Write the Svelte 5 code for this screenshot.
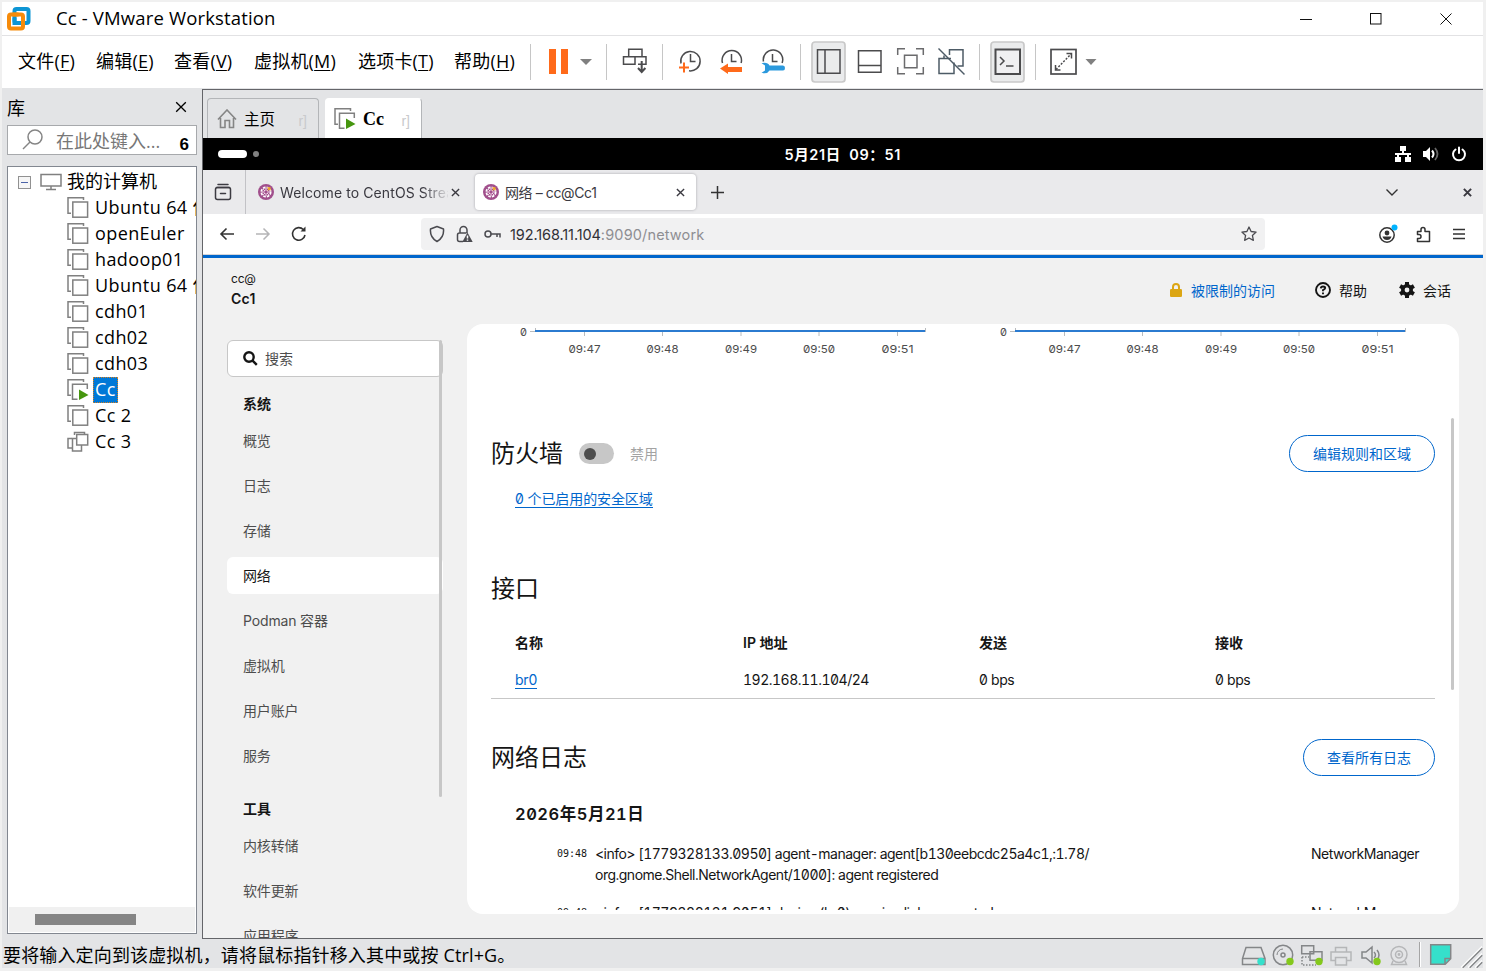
<script>
  const menus = [
    { label: '文件', key: 'F', width: 78 },
    { label: '编辑', key: 'E', width: 78 },
    { label: '查看', key: 'V', width: 80 },
    { label: '虚拟机', key: 'M', width: 104 },
    { label: '选项卡', key: 'T', width: 96 },
    { label: '帮助', key: 'H', width: 72 }
  ];

  const machines = [
    { name: 'Ubuntu 64 位', state: 'off' },
    { name: 'openEuler', state: 'off' },
    { name: 'hadoop01', state: 'off' },
    { name: 'Ubuntu 64 位', state: 'off' },
    { name: 'cdh01', state: 'off' },
    { name: 'cdh02', state: 'off' },
    { name: 'cdh03', state: 'off' },
    { name: 'Cc', state: 'running' },
    { name: 'Cc 2', state: 'off' },
    { name: 'Cc 3', state: 'clones' }
  ];

  const navGroups = [
    { title: '系统', items: ['概览', '日志', '存储', '网络', 'Podman 容器', '虚拟机', '用户账户', '服务'] },
    { title: '工具', items: ['内核转储', '软件更新', '应用程序'] }
  ];

  const ticks = [
    { x: 117.5, label: '09:47' },
    { x: 195.5, label: '09:48' },
    { x: 274, label: '09:49' },
    { x: 352, label: '09:50' },
    { x: 430.5, label: '09:51' }
  ];

  const logs = [
    {
      time: '09:48',
      lines: [
        '<info> [1779328133.0950] agent-manager: agent[b130eebcdc25a4c1,:1.78/',
        'org.gnome.Shell.NetworkAgent/1000]: agent registered'
      ],
      service: 'NetworkManager'
    },
    {
      time: '09:48',
      lines: ['<info> [1779328131.9051] device (br0): carrier: link connected'],
      service: 'NetworkManager'
    }
  ];

  let selectedMachine = 'Cc';
  let selectedNav = '网络';
</script>

{#snippet vmIcon(state)}
  <svg class="vm-icon" width="24" height="24" viewBox="0 0 24 24" fill="none" stroke="#808080" stroke-width="1.5">
    {#if state === 'clones'}
      <path d="M8.500 5V2.500h10v2" />
      <path d="M6 8.500H2v9.500h4" />
      <path d="M11 8.500H6.500v12.500h9V15" />
      <rect x="10.700" y="4.500" width="11" height="10.500" fill="#fff" />
    {:else if state === 'running'}
      <path d="M5 17.2H2V1.8h15.5V4" />
      <path d="M11.5 21.2H6.5V6.2h14.8V11" />
      <path d="M13 11.5l9.5 5.5-9.5 5z" fill="#46960f" stroke="none" />
    {:else}
      <path d="M5 17.2H2V1.8h15.5V4" />
      <rect x="6.8" y="6" width="14.8" height="15.2" fill="#fff" />
    {/if}
  </svg>
{/snippet}

{#snippet centos()}
  <svg class="favicon" width="16" height="16" viewBox="0 0 16 16">
    <circle cx="8" cy="8" r="8" fill="#a14f8c" />
    <circle cx="8" cy="8" r="4.7" fill="none" stroke="#fff" stroke-width="1.7" stroke-dasharray="2.6 1.1" />
    <path d="M8 4v8M4 8h8M5.2 5.2l5.6 5.6M10.8 5.2l-5.6 5.6" stroke="#f4dcec" stroke-width="1" />
    <circle cx="8" cy="8" r="1.3" fill="#a14f8c" />
    <path d="M9 3.2h3.6v3.6l-1.4-1-2 1.2 1-2z" fill="#efa724" />
  </svg>
{/snippet}

{#snippet cross(size, weight)}
  <svg width={size} height={size} viewBox="0 0 10 10" stroke="currentColor" stroke-width={weight} fill="none">
    <path d="M1 1l8 8M9 1l-8 8" />
  </svg>
{/snippet}

{#snippet chart()}
  <svg class="chart" width="480" height="40" viewBox="0 0 480 40">
    <path d="M63 7.5h5M68.5 4v4M458.5 4v4" stroke="#b8bbbe" fill="none" />
    {#each ticks as tick}
      <path d="M{tick.x} 8v4" stroke="#b8bbbe" />
      <text x={tick.x} y="29" text-anchor="middle" textLength="32" lengthAdjust="spacingAndGlyphs">{tick.label}</text>
    {/each}
    <path d="M68 7h390" stroke="#2b7bd0" stroke-width="2" />
    <text x="53" y="12">0</text>
  </svg>
{/snippet}

<div class="window">
  <header class="titlebar">
    <svg width="24" height="24" viewBox="0 0 24 24" fill="none" stroke-width="4">
      <rect x="7.5" y="2" width="14" height="14" rx="2" stroke="#0d95d4" />
      <rect x="2" y="7.5" width="14" height="14" rx="2" stroke="#f68b0a" />
      <path d="M7.5 10.5V16H14" stroke="#0d95d4" />
      <path d="M7.5 9.5v-2h4" stroke="#f68b0a" />
    </svg>
    <span class="title">Cc - VMware Workstation</span>
    <div class="window-buttons">
      <svg width="12" height="12" viewBox="0 0 12 12" stroke="#111" fill="none"><path d="M0 6.5h12" /></svg>
      <svg width="12" height="12" viewBox="0 0 12 12" stroke="#111" fill="none"><rect x="0.5" y="0.5" width="10.5" height="10.5" /></svg>
      <svg width="12" height="12" viewBox="0 0 12 12" stroke="#111" fill="none"><path d="M.5 .5l11 11M11.5 .5l-11 11" /></svg>
    </div>
  </header>

  <div class="menubar">
    <nav class="menus">
      {#each menus as menu}
        <span style="width: {menu.width}px">{menu.label}(<u>{menu.key}</u>)</span>
      {/each}
    </nav>
    <svg class="tools" width="580" height="50" viewBox="0 0 580 50" fill="none" stroke="#4b4b4d" stroke-width="1.5">
      <g stroke="#c6c6c6" stroke-width="1">
        <path d="M.5 8v36M76.5 8v36M132.5 8v36M270.5 8v36M449.5 8v36M505.5 8v36" />
      </g>
      <path d="M19 13h7v25h-7zM31 13h7v25h-7z" fill="#ff6a1a" stroke="none" />
      <path d="M50 23h12l-6 6z" fill="#808080" stroke="none" />
      <g>
        <path d="M98.7 13.200h13.300v7.500h-13.300zM93.500 20.700h11.500v7.500h-11.500zM105 20.700h11v7.500h-8" />
        <path d="M111.700 25v10.500M108 32l3.700 4 3.700-4" stroke-width="2" />
      </g>
      <g>
        <path d="M151 27.5a9.7 9.7 0 1 1 8 7.3M160.5 18v7.5h5" />
        <path d="M149 31.5h10M154 26.5v10" stroke="#ff6a1a" stroke-width="2" />
      </g>
      <g>
        <path d="M192.5 27a9.7 9.7 0 1 1 18.6 0M201.5 18v7.5h5" />
        <path d="M190 32.5l8-5v3.5h14v5h-14v2z" fill="#ff6a1a" stroke="none" />
      </g>
      <g>
        <path d="M233.5 25.500a9.7 9.7 0 1 1 18.6 1.500M242.500 18v7.500h5" />
        <path d="M231.500 27.200q6-1.500 8 2.300h13.500q2 0 2 2.500t-2 2.500h-13.500q-2 3.800-8 2.300l3.500-2.300v-5z" fill="#2b99dd" stroke="none" />
      </g>
      <g>
        <rect x="282" y="6" width="33" height="40" rx="3" fill="#eaebec" stroke="#c9c9c9" stroke-width="1.700" />
        <path d="M287.500 13.700h22.500v23.500h-22.500zM295 14v23" />
      </g>
      <path d="M328.500 14.700h22.500v21.500h-22.500zM329 29.500h22" />
      <path d="M367.700 19v-6.300h7.300M386 12.700h7.300v6.300M367.700 31v6.700h7.300M386 37.700h7.300v-6.700M374.500 19.200h12.500v12.500h-12.500z" stroke="#6b6b6d" />
      <g stroke="#4d5b66">
        <path d="M419.500 19v-5.300h13.500v16.300h-5.500M421 22.500h-12v15h15v-11M414 22.500v-3" />
        <path d="M408.500 12.500l26 26" />
      </g>
      <g>
        <rect x="461" y="6" width="33" height="40" rx="3" fill="#eaebec" stroke="#c9c9c9" stroke-width="1.700" />
        <rect x="465.500" y="13.500" width="24.500" height="24.500" stroke-width="2" fill="#f0f0f2" />
        <path d="M470 21l4 4-4 4M476 30h7.500" />
      </g>
      <g>
        <rect x="521" y="13.500" width="25" height="24.500" stroke-width="1.700" />
        <path d="M536.500 17.500h5v5M525.500 29v5h5" />
        <path d="M526 33.500l15-15.500" stroke-dasharray="2 1.500" />
        <path d="M555.500 23h11l-5.500 6z" fill="#808080" stroke="none" />
      </g>
    </svg>
  </div>

  <div class="workspace">
    <aside class="library">
      <div class="library-head">
        <span>库</span>
        {@render cross(12, 1.1)}
      </div>
      <div class="library-search">
        <svg width="22" height="22" viewBox="0 0 22 22" fill="none" stroke="#858585" stroke-width="1.5">
          <circle cx="13" cy="8" r="7" />
          <path d="M8 13l-7 7" />
        </svg>
        <span class="placeholder">在此处键入...</span>
        <b>6</b>
      </div>
      <div class="tree">
        <div class="tree-root">
          <svg class="toggle" width="13" height="13" viewBox="0 0 13 13"><rect x=".5" y=".5" width="12" height="12" fill="#f6f6f6" stroke="#919191" /><path d="M3 6.500h7" stroke="#4b63a7" /></svg>
          <svg width="22" height="18" viewBox="0 0 22 18" fill="none" stroke="#808080" stroke-width="1.500"><path d="M1 1.500h20v11.500H1zM11 13v3M6 16.500h10" /></svg>
          <span>我的计算机</span>
        </div>
        {#each machines as machine}
          <div class="machine">
            {@render vmIcon(machine.state)}
            <span class:selected={machine.name === selectedMachine}>{machine.name}</span>
          </div>
        {/each}
        <div class="tree-scroll"><i></i></div>
      </div>
    </aside>

    <section class="console">
      <div class="vm-tabs">
        <div class="vm-tab home">
          <svg width="20" height="20" viewBox="0 0 20 20" fill="none" stroke="#858585" stroke-width="1.600"><path d="M1 10.500L10 1l9 9.500M3.500 9v9.500h4.500V11.500h4.500v7h4V9" /></svg>
          <span>主页</span>
          <em>r]</em>
        </div>
        <div class="vm-tab active">
          {@render vmIcon('running')}
          <b>Cc</b>
          <em>r]</em>
        </div>
      </div>

      <div class="gnome-bar">
        <div class="workspaces"><i></i><i></i></div>
        <span class="clock">5月21日&nbsp; 09：51</span>
        <div class="indicators">
          <svg width="16" height="16" viewBox="0 0 16 16" fill="#fff"><path d="M5 0h6v5H9v2h7v2h-2v2h2v5h-6v-5h2V9H4v2h2v5H0v-5h2V9H0V7h7V5H5z" /></svg>
          <svg width="16" height="16" viewBox="0 0 16 16"><path d="M0 5h3l4-4v14l-4-4H0z" fill="#fff" /><path d="M9 4.500q3 3.500 0 7" fill="none" stroke="#fff" stroke-width="2" /><path d="M12 2q5 6 0 12" fill="none" stroke="#666" stroke-width="1.800" /></svg>
          <svg width="16" height="16" viewBox="0 0 16 16" fill="none" stroke="#fff" stroke-width="2" stroke-linecap="round"><path d="M4.500 3.500a6 6 0 1 0 7 0M8 1.500V7" /></svg>
        </div>
      </div>

      <div class="browser-tabs">
        <div class="tab-overview">
          <svg width="18" height="18" viewBox="0 0 18 18" fill="none" stroke="#3c3b42" stroke-width="1.500" stroke-linecap="round"><path d="M4 1.500h10M2.500 4.500h13" /><rect x="1.500" y="4.500" width="15" height="12" rx="2" /><path d="M6.500 10.500h5" /></svg>
        </div>
        <div class="browser-tab">
          {@render centos()}
          <span class="fade">Welcome to CentOS Stream</span>
          {@render cross(9, 1.500)}
        </div>
        <div class="browser-tab current">
          {@render centos()}
          <span class="grow">网络 – cc@Cc1</span>
          {@render cross(9, 1.500)}
        </div>
        <svg class="new-tab" width="13" height="13" viewBox="0 0 13 13" stroke="#333" stroke-width="1.500"><path d="M6.500 0v13M0 6.500h13" /></svg>
        <div class="tab-actions">
          <svg width="12" height="7" viewBox="0 0 12 7" fill="none" stroke="#333" stroke-width="1.400"><path d="M.5 .5L6 6l5.500-5.500" /></svg>
          {@render cross(9, 2.200)}
        </div>
      </div>

      <div class="browser-bar">
        <svg width="16" height="14" viewBox="0 0 16 14" fill="none" stroke="#333" stroke-width="1.600"><path d="M15 7H2M7.500 1.500L2 7l5.500 5.500" /></svg>
        <svg width="16" height="14" viewBox="0 0 16 14" fill="none" stroke="#b5b5b7" stroke-width="1.500"><path d="M1 7h13M8.500 1.500L14 7l-5.500 5.500" /></svg>
        <svg width="16" height="16" viewBox="0 0 16 16" fill="none" stroke="#333" stroke-width="1.600"><path d="M14 9a6.300 6.300 0 1 1-1.700-5.500" /><path d="M9.500 5.500h5V.5z" fill="#333" stroke="none" /></svg>
        <div class="address">
          <svg width="16" height="18" viewBox="0 0 16 18" fill="none" stroke="#4b4b50" stroke-width="1.500"><path d="M8 1.500L14.500 4q.8 8.500-6.500 12.500Q.7 12.500 1.500 4z" stroke-linejoin="round" /></svg>
          <svg width="17" height="18" viewBox="0 0 17 18" fill="none" stroke="#4b4b50" stroke-width="1.500"><path d="M4 8V5a3.500 3.500 0 0 1 7 0v3M7 16.500H3.500q-2 0-2-2V10q0-2 2-2h7" /><path d="M11.500 7.500l5.200 9.500H6.300z" fill="#4b4b50" stroke="none" /><path d="M11.500 10.500v3M11.500 14.500v1.300" stroke="#fff" /></svg>
          <svg width="17" height="10" viewBox="0 0 17 10" fill="none" stroke="#4b4b50" stroke-width="1.500"><circle cx="4" cy="5" r="3" /><path d="M7 5h9v3.500M13 5v3" /></svg>
          <span class="url">192.168.11.104<small>:9090/network</small></span>
          <svg width="16" height="16" viewBox="0 0 16 16" fill="none" stroke="#4b4b50" stroke-width="1.300" stroke-linejoin="round"><path d="M8 1l2.100 4.500 5 .6-3.700 3.300 1 4.900L8 12l-4.400 2.300 1-4.900L.9 6.100l5-.6z" /></svg>
        </div>
        <div class="browser-actions">
          <svg width="20" height="20" viewBox="0 0 20 20"><circle cx="9" cy="11" r="7.200" fill="none" stroke="#333" stroke-width="1.500" /><circle cx="9" cy="9" r="2.400" fill="#333" /><path d="M4.500 12.500h9q-1 3.500-4.500 3.500t-4.500-3.500z" fill="#333" /><circle cx="16.500" cy="3.500" r="3" fill="#00b3ff" /></svg>
          <svg class="extensions" width="15" height="17" viewBox="0 0 15 17" fill="none" stroke="#333" stroke-width="1.500" stroke-linejoin="round"><path d="M1.500 5.500H5V3.500a2 2 0 0 1 4 0v2h4.500v10h-12v-3h1.500a2 2 0 0 0 0-4H1.500z" /></svg>
          <svg width="12" height="12" viewBox="0 0 12 12" stroke="#333" stroke-width="1.500"><path d="M0 1.500h12M0 6h12M0 10.500h12" /></svg>
        </div>
      </div>

      <div class="cockpit">
        <div class="side">
          <div class="host"><span>cc@</span><b>Cc1</b></div>
          <div class="nav-search">
            <svg width="15" height="15" viewBox="0 0 15 15" fill="none" stroke="#151515" stroke-width="2.400"><circle cx="6" cy="6" r="4.700" /><path d="M9.300 9.300l4.500 4.500" /></svg>
            <span>搜索</span>
          </div>
          {#each navGroups as group}
            <h4>{group.title}</h4>
            {#each group.items as item}
              <div class="nav-item" class:current={item === selectedNav}>{item}</div>
            {/each}
          {/each}
          <i class="nav-scroll"></i>
        </div>

        <div class="page">
          <div class="masthead">
            <span class="access">
              <svg width="12" height="14" viewBox="0 0 12 14"><path d="M3 7V4a3 3 0 0 1 6 0v3" fill="none" stroke="#dca614" stroke-width="2" /><rect y="6" width="12" height="8" rx="1.300" fill="#dca614" /></svg>
              被限制的访问
            </span>
            <span class="help">
              <svg width="16" height="16" viewBox="0 0 16 16" fill="none" stroke="#151515" stroke-width="1.900"><circle cx="8" cy="8" r="7" /><path d="M5.800 6.300q.2-1.800 2.200-1.800t2.200 1.600Q10.200 7.200 8 8.200v1M8 10.500v1.700" /></svg>
              帮助
            </span>
            <span class="session">
              <svg width="16" height="16" viewBox="0 0 16 16" fill="none" stroke="#151515"><circle cx="8" cy="8" r="4.200" stroke-width="3.600" /><path d="M8 0v3M8 13v3M1.100 4l2.600 1.500M12.300 10.500l2.600 1.500M1.100 12l2.600-1.500M12.300 5.500L14.900 4" stroke-width="4" /></svg>
              会话
            </span>
          </div>

          <main class="card">
            <div class="content">
              <div class="charts">
                {@render chart()}
                {@render chart()}
              </div>

              <div class="section-head firewall">
                <h2>防火墙</h2>
                <i class="switch"></i>
                <span class="muted">禁用</span>
                <button>编辑规则和区域</button>
              </div>
              <a class="zones" href="#zones">0 个已启用的安全区域</a>

              <h2 class="interfaces">接口</h2>
              <div class="table">
                <div class="tr th">
                  <span>名称</span><span>IP 地址</span><span>发送</span><span>接收</span>
                </div>
                <div class="tr">
                  <span><a href="#br0">br0</a></span><span class="ip">192.168.11.104/24</span><span>0 bps</span><span>0 bps</span>
                </div>
              </div>

              <div class="section-head journal">
                <h2>网络日志</h2>
                <button>查看所有日志</button>
              </div>
              <h3>2026年5月21日</h3>
              {#each logs as log}
                <div class="log">
                  <time>{log.time}</time>
                  <div class="message">
                    {#each log.lines as line}<div>{line}</div>{/each}
                  </div>
                  <span class="service">{log.service}</span>
                </div>
              {/each}
            </div>
            <i class="page-scroll"></i>
          </main>
        </div>
      </div>
    </section>
  </div>

  <footer class="statusbar">
    <span>要将输入定向到该虚拟机，请将鼠标指针移入其中或按 Ctrl+G。</span>
    <svg width="244" height="28" viewBox="0 0 244 28" fill="none" stroke="#848688" stroke-width="1.500">
      <g transform="translate(2 0)">
        <path d="M5 7.500h15l4 11v6H1.500v-6zM1.500 18.500h22" />
        <circle cx="42" cy="15" r="9.700" /><circle cx="42" cy="15" r="2" /><path d="M36 15a6 6 0 0 1 6-6" stroke-width="1" />
        <path d="M60.700 5.700h12v8h-12zM69 11.700h12v8.500H69z" fill="#e3e4e6" />
        <path d="M61 17v8h14M61 17h7" stroke-dasharray="1.500 1.500" />
        <g stroke="#b5b6b8">
          <path d="M94.500 12V7.500h11V12M94.500 20.500H90V12h20v8.500h-4.500M94.500 17.500h11v7.500h-11z" />
          <circle cx="158" cy="14.500" r="8" /><circle cx="158" cy="14.500" r="3.500" /><circle cx="158" cy="14.500" r=".7" /><path d="M152 21l-1.500 3.500h15L164 21" />
        </g>
        <path d="M121 12h4l6-5v16l-6-5h-4zM133 12q3 3 0 6M136 10q4 5 0 10" />
        <circle cx="20" cy="21.500" r="3.700" fill="#35e0cb" stroke="none" />
        <g fill="#84c81c" stroke="none"><circle cx="49" cy="21.500" r="3.700" /><circle cx="78" cy="21.500" r="3.700" /><circle cx="136" cy="21.500" r="3.700" /></g>
        <path d="M178.500 2v25" stroke="#a5a5a5" stroke-width="1" /><path d="M179.500 2v25" stroke="#fff" stroke-width="1" />
        <path d="M189.700 4.700h20v14l-5.500 5.500h-14.500zM204 24v-5.500h5.500" fill="#35e0cb" />
      </g>
      <path d="M223.500 27.500L243 8M230.500 27.500L243 15M237.500 27.500L243 22" stroke-width="2" />
      <path d="M222 27.500L243 6.500M229 27.500L243 13.500M236 27.500L243 20.500" stroke="#fff" stroke-width="1.200" />
    </svg>
  </footer>
</div>

<style>
  :global(body) {
    background: #efefef;
  }

  .window {
    box-sizing: border-box;
    width: 1486px;
    height: 971px;
    padding: 2px 3px 3px 2px;
    overflow: hidden;
    display: flex;
    flex-direction: column;
    background: #f0f0f0;
    font-family: "Open Sans", "Noto Sans CJK SC", sans-serif;
    font-size: 18px;
    color: #000;
  }

  svg {
    display: block;
    flex: none;
  }

  h2, h3, h4 {
    margin: 0;
    font-weight: 400;
  }

  .titlebar {
    height: 33px;
    flex: none;
    display: flex;
    align-items: center;
    padding-left: 5px;
    background: #fff;
    border-bottom: 1px solid #e2e2e4;
  }

  .title {
    margin-left: 25px;
    padding-bottom: 2px;
    font-size: 18.500px;
    letter-spacing: 0.150px;
  }

  .window-buttons {
    display: flex;
    gap: 58px;
    margin: 0 31px 0 auto;
  }

  .menubar {
    height: 52px;
    flex: none;
    display: flex;
    background: #fff;
    border-bottom: 1px solid #e3e4e6;
  }

  .menus {
    display: flex;
    align-items: center;
    width: 512px;
    padding: 0 0 5px 16px;
    letter-spacing: 0.2px;
    white-space: nowrap;
  }

  .menus u {
    text-underline-offset: 2px;
  }

  .workspace {
    display: flex;
    flex: none;
    height: 850px;
    background: #e3e4e6;
  }

  .library {
    box-sizing: border-box;
    width: 200px;
    padding: 0 5px;
    display: flex;
    flex-direction: column;
  }

  .library-head {
    display: flex;
    align-items: center;
    justify-content: space-between;
    height: 36px;
    padding: 0 10px 0 0;
  }

  .library-search {
    display: flex;
    align-items: center;
    height: 28px;
    padding: 0 7px 0 14px;
    background: #fff;
    border: 1px solid #a7a9ac;
  }

  .library-search .placeholder {
    margin-left: 12px;
    color: #777;
    white-space: nowrap;
  }

  .library-search b {
    margin: 9px 0 0 auto;
    font: 700 17px "Liberation Sans", sans-serif;
  }

  .tree {
    position: relative;
    height: 766px;
    margin-top: 11px;
    overflow: hidden;
    background: #fff;
    border: 1px solid #828790;
  }

  .tree-root,
  .machine {
    display: flex;
    align-items: center;
    height: 26px;
    white-space: nowrap;
  }

  .tree-root {
    margin-bottom: 2px;
    padding-left: 10px;
  }

  .tree-root .toggle {
    margin-top: 4px;
  }

  .tree-root svg + svg {
    margin: 3px 5px 0 9px;
  }

  .machine {
    padding-left: 58px;
  }

  .machine span {
    height: 24px;
    margin-left: 3px;
    padding: 0 1px;
    line-height: 23px;
    letter-spacing: 0.4px;
    border: 1px solid transparent;
  }

  .machine .selected {
    color: #fff;
    background: #0078d7;
    border: 1px dotted #d88020;
  }

  .tree-scroll {
    position: absolute;
    left: 1px;
    right: 1px;
    bottom: 1px;
    height: 25px;
    background: #f0f0f0;
  }

  .tree-scroll i {
    display: block;
    width: 101px;
    height: 11px;
    margin: 7px 0 0 26px;
    background: #858585;
  }

  .console {
    box-sizing: border-box;
    width: 1281px;
    height: 850px;
    border: solid #646569;
    border-width: 1px 0 1px 1px;
    display: flex;
    flex-direction: column;
    font-family: Inter, "Noto Sans CJK SC", sans-serif;
    font-size: 14px;
    overflow: hidden;
  }

  .vm-tabs {
    display: flex;
    align-items: flex-end;
    gap: 6px;
    height: 48px;
    padding-left: 4px;
    flex: none;
  }

  .vm-tab {
    box-sizing: border-box;
    display: flex;
    align-items: center;
    height: 40px;
    border: 1px solid #b3b5b8;
    border-bottom: 0;
    border-radius: 4px 4px 0 0;
  }

  .vm-tab.home {
    width: 112px;
    padding-left: 9px;
    font-size: 15.500px;
  }

  .vm-tab.active {
    width: 97px;
    padding-left: 7px;
    background: #fff;
    border-color: #fff #b3b5b8 #fff #fff;
  }

  .vm-tab span {
    margin-left: 7px;
    padding-bottom: 1px;
  }

  .vm-tab b {
    margin: 2px 0 0 6px;
    font: 700 18px "Liberation Serif", serif;
  }

  .vm-tab em {
    margin: 5px 11px 0 auto;
    font: 14px "Liberation Sans", sans-serif;
    color: #c9cacc;
  }

  .gnome-bar {
    display: grid;
    grid-template-columns: 1fr auto 1fr;
    align-items: center;
    height: 32px;
    flex: none;
    background: #000;
    color: #fff;
  }

  .workspaces {
    display: flex;
    align-items: center;
    gap: 6px;
    padding-left: 15px;
  }

  .workspaces i {
    width: 29px;
    height: 8px;
    border-radius: 4px;
    background: #fff;
  }

  .workspaces i + i {
    width: 6px;
    height: 6px;
    background: #808080;
  }

  .clock {
    width: 117px;
    padding-bottom: 2px;
    font-weight: 600;
    font-size: 14.500px;
    letter-spacing: 0.6px;
    white-space: nowrap;
  }

  .indicators {
    display: flex;
    justify-content: flex-end;
    gap: 12px;
    padding-right: 16px;
  }

  .browser-tabs {
    display: flex;
    align-items: center;
    height: 44px;
    flex: none;
    background: #eaeaec;
    color: #3a3940;
  }

  .tab-overview {
    display: flex;
    align-items: center;
    box-sizing: border-box;
    width: 43px;
    height: 44px;
    padding-left: 11px;
    border-right: 1px solid #c2c2c6;
  }

  .browser-tab {
    box-sizing: border-box;
    display: flex;
    align-items: center;
    width: 229px;
    height: 36px;
    padding: 0 15px 0 12px;
    font-size: 14px;
  }

  .browser-tab span {
    margin-left: 6px;
    white-space: nowrap;
    overflow: hidden;
  }

  .fade {
    width: 168px;
    margin-right: 3px;
    letter-spacing: 0.1px;
    mask-image: linear-gradient(to right, #000 142px, transparent 170px);
  }

  .browser-tab.current {
    width: 221px;
    padding: 0 11px 0 8px;
    background: #fff;
    border-radius: 4px;
    box-shadow: 0 0 2px 1px #c9c9cd;
  }

  .grow {
    flex: 1;
    letter-spacing: -0.4px;
  }

  .new-tab {
    margin-left: 15px;
  }

  .tab-actions {
    display: flex;
    align-items: center;
    gap: 65px;
    margin: 0 11px 0 auto;
  }

  .browser-bar {
    display: flex;
    align-items: center;
    gap: 20px;
    height: 40px;
    padding-left: 16px;
    flex: none;
    background: #fff;
    border-bottom: 1px solid #d5d5d8;
  }

  .address {
    box-sizing: border-box;
    display: flex;
    align-items: center;
    gap: 11px;
    width: 844px;
    height: 32px;
    margin-left: 94px;
    padding: 0 8px;
    background: #f1f1f2;
    border-radius: 4px;
  }

  .url {
    flex: 1;
    margin-left: -2px;
    color: #303036;
    font-size: 14.500px;
    letter-spacing: -0.1px;
  }

  .url small {
    font-size: 14.500px;
    letter-spacing: 0.150px;
    color: #8e8e92;
  }

  .browser-actions {
    display: flex;
    align-items: center;
    gap: 20px;
    margin: 0 18px 0 auto;
  }

  .extensions {
    margin: 0 2px 0 -2px;
  }

  .cockpit {
    display: flex;
    flex: 1;
    min-height: 0;
    overflow: hidden;
    border-top: 3px solid #0066cc;
    background: #f1f1f1;
    font-feature-settings: "zero";
    color: #151515;
  }

  .side {
    position: relative;
    width: 216px;
    padding: 0 24px;
  }

  .host {
    display: flex;
    flex-direction: column;
    height: 71px;
    padding: 11px 0 0 4px;
    line-height: 20px;
    font-size: 12px;
    letter-spacing: -0.2px;
  }

  .host b {
    font-size: 14px;
    font-weight: 600;
    letter-spacing: 0.2px;
  }

  .nav-search {
    box-sizing: border-box;
    display: flex;
    align-items: center;
    gap: 7px;
    height: 37px;
    padding-left: 15px;
    background: #fff;
    border: 1px solid #c7c7c7;
    border-radius: 6px;
    color: #4d4d4d;
  }

  .nav-search span {
    padding-bottom: 2px;
  }

  h4 {
    height: 36px;
    margin-top: 9px;
    padding-left: 16px;
    font-size: 14px;
    line-height: 36px;
    font-weight: 600;
  }

  .nav-item {
    height: 37px;
    margin-bottom: 8px;
    padding-left: 16px;
    line-height: 37px;
    letter-spacing: -0.150px;
    color: #4d4d4d;
    border-radius: 6px;
  }

  .nav-item + h4 {
    margin-top: 17px;
  }

  .nav-item.current {
    color: #151515;
    background: #fff;
  }

  .nav-scroll,
  .page-scroll {
    position: absolute;
    width: 3px;
    border-radius: 2px;
    background: #c7c7c7;
  }

  .nav-scroll {
    top: 82px;
    right: 25px;
    height: 457px;
  }

  .page {
    display: flex;
    flex-direction: column;
    width: 992px;
  }

  .masthead {
    box-sizing: border-box;
    display: flex;
    align-items: center;
    justify-content: flex-end;
    gap: 40px;
    height: 66px;
    padding: 0 8px 3px 0;
  }

  .masthead span {
    display: flex;
    align-items: center;
    gap: 8px;
  }

  .masthead .session {
    margin-left: -8px;
  }

  .masthead .access {
    gap: 9px;
    color: #0066cc;
  }

  .card {
    position: relative;
    height: 590px;
    background: #fff;
    border-radius: 16px;
  }

  .content {
    box-sizing: border-box;
    height: 586px;
    padding: 0 24px;
    overflow: hidden;
  }

  .charts {
    display: flex;
    height: 111px;
    margin: 0 -24px;
  }

  .chart {
    font-size: 11px;
    fill: #4d4d4d;
  }

  .section-head {
    display: flex;
    align-items: center;
    height: 37px;
  }

  h2 {
    font-size: 24px;
    line-height: 36px;
  }

  .switch {
    box-sizing: border-box;
    width: 35px;
    height: 21px;
    margin: 0 16px;
    padding: 5px;
    border-radius: 11px;
    background: #c7c7c7;
  }

  .switch::before {
    content: "";
    display: block;
    width: 12px;
    height: 12px;
    border-radius: 6px;
    background: #4d4d4d;
  }

  .muted {
    padding-bottom: 1px;
    color: #a3a3a3;
  }

  button {
    box-sizing: border-box;
    height: 37px;
    margin-left: auto;
    padding: 0 23px 1px;
    font: inherit;
    color: #0066cc;
    background: transparent;
    border: 1px solid #0066cc;
    border-radius: 19px;
  }

  a {
    color: #0066cc;
    text-decoration: none;
    border-bottom: 1px solid #0066cc;
  }

  .zones {
    display: block;
    width: max-content;
    height: 17px;
    margin: 18px 0 0 24px;
    line-height: 17px;
    letter-spacing: -0.1px;
  }

  .interfaces {
    margin-top: 63px;
  }

  .table {
    margin-top: 16px;
    height: 75px;
    border-bottom: 1px solid #c7c7c7;
  }

  .tr {
    display: grid;
    grid-template-columns: 228px 236px 236px 220px;
    align-items: center;
    height: 37px;
    padding-left: 24px;
    letter-spacing: -0.4px;
  }

  .th {
    font-weight: 600;
    letter-spacing: 0;
  }

  .tr + .tr {
    padding-top: 1px;
  }

  .tr a {
    display: inline-block;
    line-height: 16px;
    letter-spacing: -0.2px;
    font-feature-settings: normal;
  }

  .ip {
    font-feature-settings: "zero", "tnum";
    letter-spacing: -0.5px;
  }

  .journal {
    margin-top: 40px;
  }

  h3 {
    margin: 25px 0 0 24px;
    font-size: 16.500px;
    line-height: 27px;
    font-weight: 600;
    font-feature-settings: "zero", "tnum";
    letter-spacing: 0.5px;
  }

  .log {
    display: grid;
    grid-template-columns: 38px 716px 1fr;
    margin: 15px 0 0 66px;
    line-height: 21px;
    white-space: nowrap;
  }

  .log + .log {
    margin-top: 17px;
  }

  .log time {
    font: 10px/22px "DejaVu Sans Mono", monospace;
  }

  .message {
    font-feature-settings: "zero", "tnum";
    letter-spacing: -0.5px;
  }

  .service {
    letter-spacing: -0.5px;
  }

  .page-scroll {
    top: 94px;
    right: 5px;
    height: 272px;
  }

  .statusbar {
    display: flex;
    flex: none;
    align-items: center;
    height: 29px;
    background: #e3e4e6;
    white-space: nowrap;
  }

  .statusbar span {
    padding-left: 1px;
    letter-spacing: 0.150px;
  }

  .statusbar svg {
    margin-left: auto;
  }
</style>
